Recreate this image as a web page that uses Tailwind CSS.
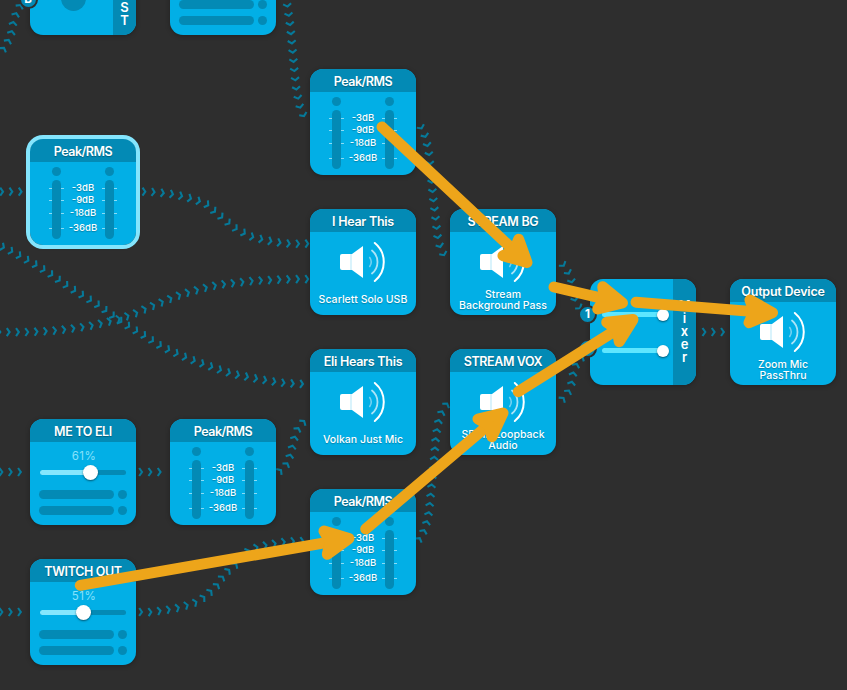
<!DOCTYPE html>
<html lang="en">
<head>
<meta charset="utf-8">
<title>Audio routing</title>
<script src="https://cdn.jsdelivr.net/npm/@tailwindcss/browser@4"></script>
</head>
<body class="bg-[#2e2e2e] overflow-hidden">
<main id="canvas" class="relative w-[847px] h-[690px] overflow-hidden bg-[#2e2e2e] font-['Inter',sans-serif] text-white">
  <svg id="wires" class="absolute inset-0" width="847" height="690" fill="none" stroke="#067999" stroke-width="2.1"></svg>
  <div id="nodes"></div>
  <svg id="arrows" class="absolute inset-0" width="847" height="690" fill="#eda51a" stroke="#eda51a" stroke-width="11" stroke-linecap="round" stroke-linejoin="round"></svg>
</main>

<template id="card">
  <section class="absolute w-[106px] h-[106px] rounded-[13px] bg-[#02afe6] shadow-[0_1px_5px_rgba(0,0,0,0.3)]">
    <div class="flex flex-col w-full h-full rounded-[13px] overflow-hidden" data-body></div>
  </section>
</template>

<script>
const head = (t, tracking) => `<h2 class="h-[23px] shrink-0 bg-[#038ab5] text-center text-[12.5px] leading-[25px] font-semibold whitespace-nowrap [text-shadow:0_1px_1px_rgba(0,0,0,0.3)]"><span style="letter-spacing:${tracking}px">${t}</span></h2>`;

const bar = `<div class="relative w-[15px] flex flex-col items-center">
  <i class="block w-[9px] h-[9px] rounded-full bg-[#038ab5]"></i>
  <i class="block mt-1 w-[9px] h-[59px] rounded-full bg-[#038ab5]"></i>
  <svg class="absolute left-0 top-0" width="15" height="72" stroke="#8adcf5" stroke-width="1"><path d="M0 21.5h3M12 21.5h3M0 33.5h3M12 33.5h3M0 46.5h3M12 46.5h3M0 61.5h3M12 61.5h3"/></svg>
</div>`;
const meter = () => head('Peak/RMS', -0.47) + `<div class="flex justify-between pl-[19px] pr-[19px] pt-[5px]">${bar}
  <div class="flex flex-col items-center pt-[15px] text-[9.5px] leading-[12px] font-medium whitespace-nowrap [text-shadow:0_1px_1px_rgba(0,0,0,0.25)]"><span>-3dB</span><span>-9dB</span><span class="mt-[1px]">-18dB</span><span class="mt-[3px]">-36dB</span></div>${bar}</div>`;

const speaker = (t, tracking, lines) => head(t, tracking) + `<svg class="shrink-0 mx-auto mt-[8px]" width="50" height="44" fill="none" stroke-linecap="round">
  <path d="M4 14h8v16H4a2 2 0 0 1-2-2V16a2 2 0 0 1 2-2z" fill="#fff"/><path d="M12 14h2v16h-2z" fill="#d9f3fc"/><path d="M14 14L25 6v32L14 30z" fill="#fff"/>
  <path d="M31.700 17.500A7.800 7.800 0 0 1 31.700 26.500" stroke="#70d0f1" stroke-width="1.6"/><path d="M34 10.500A14.800 14.800 0 0 1 34 33.500" stroke="#aae3f7" stroke-width="1.8"/><path d="M36.800 3A24.600 24.600 0 0 1 36.800 41" stroke="#fff" stroke-width="2"/></svg>
  <div class="flex flex-col items-center justify-center h-[31px] text-[10.5px] leading-[11px] tracking-[0.05px] font-medium whitespace-nowrap [text-shadow:0_1px_1px_rgba(0,0,0,0.25)]">${lines.map(l => `<span>${l}</span>`).join('')}</div>`;

const slots = `<div class="flex flex-col gap-[7px]">` + `<div class="flex gap-1"><i class="w-[75px] h-[9px] rounded-full bg-[#038ab5]"></i><i class="w-[9px] h-[9px] rounded-full bg-[#038ab5]"></i></div>`.repeat(2) + `</div>`;
const volume = (t, tracking, v, x) => head(t, tracking) + `<div class="px-[9px]">
  <div class="pt-[6px] pl-[2px] text-center text-[11.5px] leading-[17px] tracking-[0.5px] text-[#86e2fb]">${v}</div>
  <div class="relative mt-[5px] mx-[1px] mb-[15px] h-[5px] rounded-full bg-[#038ab5]">
    <i class="block h-[5px] rounded-full bg-[#86e6fd]" style="width:${x}px"></i>
    <i class="absolute -top-[5px] w-[15px] h-[15px] rounded-full bg-white shadow-[0_1px_2px_rgba(0,0,0,0.5)]" style="left:${x - 7.500}px"></i>
  </div>${slots}</div>`;
const track = `<div class="relative w-[62px] h-[5px] rounded-full bg-[#5ee6ff]"><i class="absolute -right-[5px] -top-[3px] w-[12px] h-[12px] rounded-full bg-white shadow-[0_1px_2px_rgba(0,0,0,0.5)]"></i></div>`;
const side = (body, letters, pad) => `<div class="flex h-full"><div class="relative flex-1">${body}</div><div class="w-[23px] bg-[#038ab5] flex flex-col items-center ${pad} text-[13px] leading-[13px] font-semibold">${letters.map(l => `<span class="h-[13px]">${l}</span>`).join('')}</div></div>`;

const nodes = [
  [30, -71, side('<i class="absolute left-[31px] top-[57px] w-[25px] h-[25px] rounded-full bg-[#038ab5]"></i>', ['S', 'T'], 'pt-[72px]')],
  [170, -71, `<div class="px-[9px] pt-[71px]">${slots}</div>`],
  [30, 139, meter(), true],
  [310, 69, meter()],
  [310, 209, speaker('I Hear This', -0.27, ['Scarlett Solo USB'])],
  [450, 209, speaker('STREAM BG', -0.3, ['Stream', 'Background Pass'])],
  [590, 279, side(`<div class="flex flex-col gap-[31px] pl-[12px] pt-[33px]">${track}${track}</div>`, ['M', 'i', 'x', 'e', 'r'], 'pt-[20px]')],
  [730, 279, speaker('Output Device', -0.22, ['Zoom Mic', 'PassThru'])],
  [310, 349, speaker('Eli Hears This', -0.27, ['Volkan Just Mic'])],
  [450, 349, speaker('STREAM VOX', -0.42, ['SPDIF Loopback', 'Audio'])],
  [30, 419, volume('ME TO ELI', -0.33, '61%', 50)],
  [170, 419, meter()],
  [310, 489, meter()],
  [30, 559, volume('TWITCH OUT', -0.38, '51%', 43)],
];
const host = document.getElementById('nodes');
for (const [x, y, html, selected] of nodes) {
  const el = document.getElementById('card').content.firstElementChild.cloneNode(true);
  el.style.left = x + 'px';
  el.style.top = y + 'px';
  el.querySelector('[data-body]').innerHTML = html;
  if (selected) el.insertAdjacentHTML('beforeend', '<i class="absolute -inset-1 rounded-[17px] border-4 border-[#84e5fd]"></i>');
  host.append(el);
}
for (const [x, y, t] of [[28, -0.500, 'B'], [587.500, 314, '1'], [587.500, 348.500, '2']]) {
  host.insertAdjacentHTML('beforeend', `<b class="absolute w-[19px] h-[19px] rounded-full bg-[#038ab5] border-2 border-[#2e2e2e] text-center text-[11.5px] leading-[15px] font-bold" style="left:${x - 9.500}px;top:${y - 9.500}px">${t}</b>`);
}

const NS = 'http://www.w3.org/2000/svg';
const wires = [
  [[3.3,49],[8.3,40.7],[11.7,31.7],[13.3,22.7],[16,14],[20,6]],
  [[287.3,5.3],[290,24],[291,33.3],[292.7,51.700],[294.3,70],[296.3,88.700],[298,97.700],[300,106.700],[303.500,115]],
  [[1.700,191.700],[24,191.700]],
  [[144,191.700],[153,192],[171,194],[189,198],[206,204],[213,210],[227,221.500],[235,228],[243,232.500],[251,236.500],[270,241],[288,243.500],[309,243.700]],
  [[2.700,247],[11,251],[27,260],[36,265],[52,275],[66,285],[98,305],[113,316],[128,326],[145,336],[161,346],[178,354],[195,361],[212,367],[230,373],[248,377],[267,380.500],[285,383],[304,384]],
  [[-1,332],[27,332],[55,330.500],[83,327],[101,323.500],[118,319],[136,313],[145,309],[162,302],[180,295],[197,290],[215,285.500],[234,283],[252,281],[271,280],[289,279.300],[309,279]],
  [[421,127.300],[425,135.700],[427.300,145],[429,154],[431.700,182],[433.500,200.500],[435.700,219],[437.700,237],[440,246],[443.500,254]],
  [[563,264.700],[568.300,272.700],[571.700,281.700],[575,300],[579.500,307.700]],
  [[562.700,399],[568.300,391.700],[571.700,382.700],[573.300,373.300],[576.700,364.300],[583,356]],
  [[704,332],[724,332]],
  [[1,472],[20,472]], [[140.700,472],[160,472]], [[1,612],[20,612]],
  [[140.700,612],[150,612],[159,611],[177,608],[195,602.500],[203,598],[210,592],[216.700,585.700],[222,577.700],[228.300,570.700],[235.300,565],[242,556],[249,550.700],[258,547],[267.500,545],[286,541.700],[305,541]],
  [[280,471],[286.700,464.300],[290,455.700],[292.300,446.700],[294.700,437.300],[297.700,429.300],[303.300,422]],
  [[419,539.300],[423.700,531.300],[426.700,522.300],[428.700,513],[430.700,494.700],[434.300,457.300],[435.700,439],[438.700,420.700],[442,412],[446.700,404.300]],
];
const step = 9.270;
let marks = '';
for (const p of wires) {
  let d = `M${p[0]}`;
  for (let i = 0; i < p.length - 1; i++) {
    const a = p[i - 1] || p[i], b = p[i], c = p[i + 1], e = p[i + 2] || c;
    d += `C${b[0] + (c[0] - a[0]) / 6},${b[1] + (c[1] - a[1]) / 6} ${c[0] - (e[0] - b[0]) / 6},${c[1] - (e[1] - b[1]) / 6} ${c}`;
  }
  const path = document.createElementNS(NS, 'path');
  path.setAttribute('d', d);
  const len = path.getTotalLength();
  for (let s = 0; s <= len + 2; s += step) {
    const q = path.getPointAtLength(Math.min(s, len));
    const u = path.getPointAtLength(Math.max(0, s - 2)), v = path.getPointAtLength(Math.min(len, s + 2));
    const r = Math.atan2(v.y - u.y, v.x - u.x) * 180 / Math.PI;
    marks += `<path transform="translate(${q.x} ${q.y}) rotate(${r})" d="M-1.500-4L1.300 0L-1.500 4"/>`;
  }
}
document.getElementById('wires').innerHTML = marks;

const arrows = [
  [[382,127],[527,262.500],[518.700,239.300],[503,255.700]],
  [[554,287],[622.500,303],[602.700,286.700],[597.700,309]],
  [[636,302.300],[772.500,312.700],[750,300],[749,322.700]],
  [[518.300,391.700],[633,319.500],[606.700,322.300],[619.300,341.700]],
  [[365.700,529],[503,413],[478,419],[492,436.700]],
  [[80.300,585.300],[349,538.500],[324,531],[327.300,554.300]],
];
document.getElementById('arrows').innerHTML = arrows.map(([s, t, a, b]) => {
  const k = 0.8;
  const m = [t[0] + ((a[0] + b[0]) / 2 - t[0]) * k, t[1] + ((a[1] + b[1]) / 2 - t[1]) * k];
  return `<path d="M${s}L${m}"/><path d="M${t}L${a}L${m}L${b}Z"/>`;
}).join('');
</script>
</body>
</html>
